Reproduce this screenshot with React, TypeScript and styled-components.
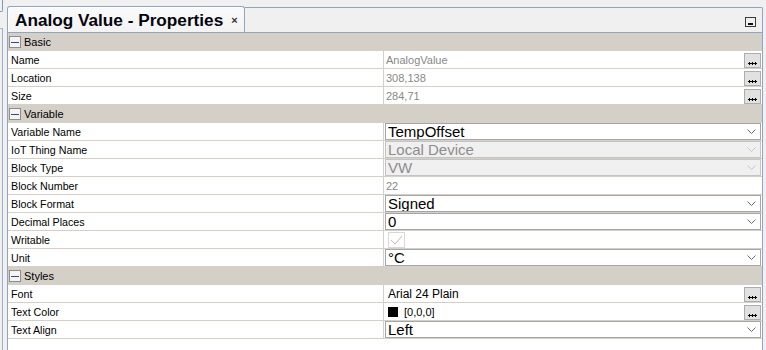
import React from "react";
import styled, { createGlobalStyle } from "styled-components";

const GlobalStyle = createGlobalStyle`
  html, body { margin: 0; padding: 0; background: #f0f0f0; }
  body { font-family: "Liberation Sans", Arial, sans-serif; }
  * { box-sizing: border-box; }
`;

const Screen = styled.div`
  display: flex;
  height: 350px;
  overflow: hidden;
  background: #f0f0f0;
`;

const SideStrip = styled.div`
  width: 7px;
  flex: none;
  display: flex;
  flex-direction: column;
`;

const SideTop = styled.div`
  width: 3px;
  height: 12px;
  border-right: 1px solid #7f9db9;
  border-bottom: 1px solid #7f9db9;
  border-bottom-right-radius: 2px;
`;

const SideBody = styled.div`
  width: 3px;
  flex: 1;
  margin-top: 16px;
  border-top: 1px solid #a9b8c8;
  border-right: 1px solid #9fb1c5;
`;

const Panel = styled.div`
  flex: 1;
  margin: 6px 3px 0 0;
  display: flex;
  flex-direction: column;
`;

const Header = styled.div`
  height: 27px;
  display: flex;
  border-bottom: 1px solid #8ea6bf;
`;

const Tab = styled.div`
  width: 238px;
  flex: none;
  display: flex;
  align-items: center;
  padding: 2px 0 0 7px;
  border: 1px solid #8ea6bf;
  border-bottom: none;
  border-radius: 3px 3px 0 0;
  background: linear-gradient(#fafafa, #f3f3f3);
  box-shadow: inset 1px 1px 0 #ffffff;
`;

const TabTitle = styled.span`
  font-family: "Liberation Sans", Arial, sans-serif;
  font-weight: bold;
  font-size: 17.2px;
  color: #050510;
  white-space: nowrap;
`;

const TabClose = styled.span`
  margin-left: 8px;
  font-size: 11px;
  font-weight: bold;
  color: #333;
  line-height: 1;
`;

const HeaderRest = styled.div`
  flex: 1;
  display: flex;
  align-items: center;
  justify-content: flex-end;
  padding-right: 6px;
  border-top: 1px solid #8ea6bf;
  border-right: 1px solid #8ea6bf;
  border-top-right-radius: 2px;
  margin-top: 1px;
`;

const MinimizeIcon = styled.div`
  width: 11px;
  height: 10px;
  border: 1px solid #3a3a3a;
  display: flex;
  align-items: flex-end;
  justify-content: center;
  padding-bottom: 1px;
  margin-top: 3px;
  &::after {
    content: "";
    width: 5px;
    height: 2px;
    background: #111;
  }
`;

const Grid = styled.div`
  flex: 1;
  background: #ffffff;
  border-left: 1px solid #8ea6bf;
  border-right: 1px solid #8ea6bf;
  display: grid;
  grid-template-columns: 376px 1fr;
  grid-auto-rows: 18px;
  align-content: start;
`;

const GroupRow = styled.div`
  grid-column: 1 / -1;
  background: #d4d0c8;
  display: flex;
  align-items: center;
  padding-left: 1px;
  font-size: 11px;
  color: #000;
`;

const GroupToggle = styled.span`
  width: 12px;
  height: 12px;
  border: 1px solid #8c8c8c;
  background: #f4f4f4;
  display: flex;
  align-items: center;
  justify-content: center;
  margin-right: 3px;
  &::after {
    content: "";
    width: 8px;
    height: 1px;
    background: #304d78;
  }
`;

const LabelCell = styled.div`
  border-right: 1px solid #d4d0c8;
  border-bottom: 1px solid #d4d0c8;
  padding: 1px 0 0 3px;
  font-size: 10.7px;
  line-height: 16px;
  color: #000;
  white-space: nowrap;
  overflow: hidden;
`;

const ValueCell = styled.div`
  border-bottom: 1px solid #d4d0c8;
  display: flex;
  align-items: center;
  padding: 0 1px 0 1px;
  overflow: hidden;
`;

const ValueText = styled.span<{ $muted?: boolean; $size?: number; $indent?: number }>`
  flex: 1;
  padding-left: ${(p) => p.$indent ?? 1}px;
  padding-top: 1px;
  font-size: ${(p) => p.$size ?? 11}px;
  color: ${(p) => (p.$muted ? "#888888" : "#000")};
  white-space: nowrap;
`;

const EllipsisButton = styled.span`
  width: 17px;
  height: 15px;
  flex: none;
  margin-top: 1px;
  background: #e1e1e1;
  border: 1px solid #adadad;
  display: flex;
  align-items: flex-end;
  justify-content: center;
  padding-bottom: 2px;
`;

const Combo = styled.div<{ $disabled?: boolean }>`
  flex: 1;
  height: 17px;
  display: flex;
  align-items: flex-start;
  border: 1px solid ${(p) => (p.$disabled ? "#c4c4c4" : "#a6a6a6")};
  background: ${(p) => (p.$disabled ? "#f0f0f0" : "#ffffff")};
  overflow: hidden;
`;

const ComboText = styled.span<{ $disabled?: boolean }>`
  flex: 1;
  padding-left: 2px;
  font-size: 15px;
  line-height: 15px;
  height: 15px;
  overflow: hidden;
  color: ${(p) => (p.$disabled ? "#8d8d8d" : "#000")};
  white-space: nowrap;
`;

const Chevron = styled.span`
  width: 13px;
  height: 15px;
  flex: none;
  display: flex;
  align-items: center;
  justify-content: center;
  margin-right: 2px;
`;

const CheckBox = styled.span`
  width: 17px;
  height: 16px;
  margin-left: 3px;
  border: 1px solid #d8d8d8;
  background: #fff;
  display: flex;
  align-items: center;
  justify-content: center;
`;

const Swatch = styled.span`
  width: 10px;
  height: 10px;
  background: #000;
  margin: 1px 5px 0 3px;
  flex: none;
`;

const DotsIcon = () => (
  <svg width="9" height="3" viewBox="0 0 9 3">
    <rect x="0" y="1" width="9" height="1" fill="#000" />
    <rect x="1" y="0" width="1" height="3" fill="#000" />
    <rect x="4" y="0" width="1" height="3" fill="#000" />
    <rect x="7" y="0" width="1" height="3" fill="#000" />
  </svg>
);

const ChevronIcon = ({ disabled }: { disabled?: boolean }) => (
  <svg width="9" height="5" viewBox="0 0 9 5">
    <polyline
      points="0.5,0.5 4.5,4.5 8.5,0.5"
      fill="none"
      stroke={disabled ? "#c6c6c6" : "#6a6a6a"}
      strokeWidth="1"
    />
  </svg>
);

type Row =
  | { kind: "group"; label: string }
  | {
      kind: "text";
      label: string;
      value: string;
      muted?: boolean;
      button?: boolean;
      size?: number;
      indent?: number;
    }
  | { kind: "combo"; label: string; value: string; disabled?: boolean }
  | { kind: "check"; label: string }
  | { kind: "color"; label: string; value: string };

const rows: Row[] = [
  { kind: "group", label: "Basic" },
  { kind: "text", label: "Name", value: "AnalogValue", muted: true, button: true },
  { kind: "text", label: "Location", value: "308,138", muted: true, button: true },
  { kind: "text", label: "Size", value: "284,71", muted: true, button: true },
  { kind: "group", label: "Variable" },
  { kind: "combo", label: "Variable Name", value: "TempOffset" },
  { kind: "combo", label: "IoT Thing Name", value: "Local Device", disabled: true },
  { kind: "combo", label: "Block Type", value: "VW", disabled: true },
  { kind: "text", label: "Block Number", value: "22", muted: true },
  { kind: "combo", label: "Block Format", value: "Signed" },
  { kind: "combo", label: "Decimal Places", value: "0" },
  { kind: "check", label: "Writable" },
  { kind: "combo", label: "Unit", value: "°C" },
  { kind: "group", label: "Styles" },
  { kind: "text", label: "Font", value: "Arial 24 Plain", button: true, size: 12, indent: 3 },
  { kind: "color", label: "Text Color", value: "[0,0,0]" },
  { kind: "combo", label: "Text Align", value: "Left" },
];

const renderValue = (r: Row) => {
  switch (r.kind) {
    case "text":
      return (
        <>
          <ValueText $muted={r.muted} $size={r.size} $indent={r.indent}>
            {r.value}
          </ValueText>
          {r.button && (
            <EllipsisButton>
              <DotsIcon />
            </EllipsisButton>
          )}
        </>
      );
    case "combo":
      return (
        <Combo $disabled={r.disabled}>
          <ComboText $disabled={r.disabled}>{r.value}</ComboText>
          <Chevron>
            <ChevronIcon disabled={r.disabled} />
          </Chevron>
        </Combo>
      );
    case "check":
      return (
        <CheckBox>
          <svg width="13" height="10" viewBox="0 0 13 10">
            <polyline points="1,5 5,9 12,1" fill="none" stroke="#bcbcbc" strokeWidth="1" />
          </svg>
        </CheckBox>
      );
    case "color":
      return (
        <>
          <Swatch />
          <ValueText $size={11}>{r.value}</ValueText>
          <EllipsisButton>
            <DotsIcon />
          </EllipsisButton>
        </>
      );
    default:
      return null;
  }
};

export default function App() {
  return (
    <>
      <GlobalStyle />
      <Screen>
        <SideStrip>
          <SideTop />
          <SideBody />
        </SideStrip>
        <Panel>
          <Header>
            <Tab>
              <TabTitle>Analog Value - Properties</TabTitle>
              <TabClose>×</TabClose>
            </Tab>
            <HeaderRest>
              <MinimizeIcon />
            </HeaderRest>
          </Header>
          <Grid>
            {rows.map((r, i) =>
              r.kind === "group" ? (
                <GroupRow key={i}>
                  <GroupToggle />
                  {r.label}
                </GroupRow>
              ) : (
                <React.Fragment key={i}>
                  <LabelCell>{r.label}</LabelCell>
                  <ValueCell>{renderValue(r)}</ValueCell>
                </React.Fragment>
              )
            )}
          </Grid>
        </Panel>
      </Screen>
    </>
  );
}
